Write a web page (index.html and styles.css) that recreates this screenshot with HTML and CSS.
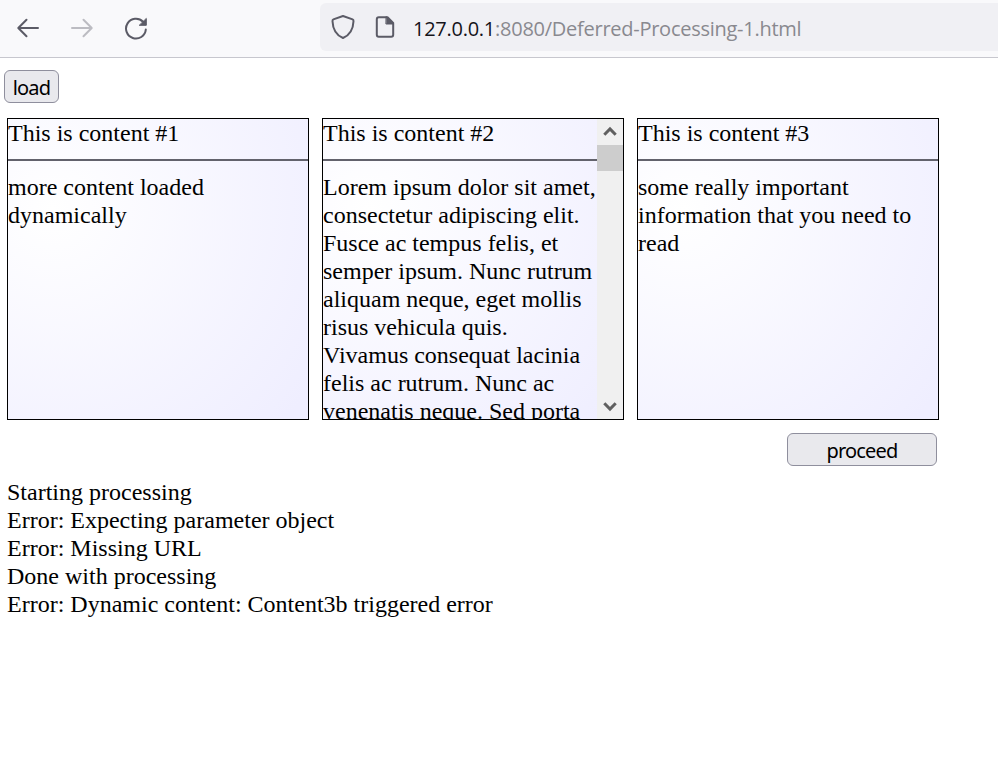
FILE: index.html
```html
<!DOCTYPE html>
<html lang="en">
<head>
<meta charset="utf-8">
<title>Deferred Processing</title>
<link rel="stylesheet" href="styles.css">
</head>
<body>
<header class="toolbar">
  <nav class="nav">
    <svg class="icon" width="24" height="24" viewBox="0 0 24 24"><path d="M22 12H2.500M10.500 3.700L2.300 12L10.500 20.300"/></svg>
    <svg class="icon disabled" width="24" height="24" viewBox="0 0 24 24"><path d="M2 12H21.500M13.500 3.700L21.700 12L13.500 20.300"/></svg>
    <svg class="icon" width="24" height="24" viewBox="0 0 24 24"><path d="M19 5.700A9.900 9.900 0 1 0 21.800 13.600"/><path class="solid" d="M22.300 2.800V9.300H15.600Z"/></svg>
  </nav>
  <div class="address">
    <svg class="icon" width="24" height="26" viewBox="0 0 24 26"><path d="M12 2L21.600 5.400Q22.600 5.800 22.500 7.200C22.200 15 18.500 21.200 12 24C5.500 21.200 1.800 15 1.500 7.200Q1.400 5.800 2.400 5.400Z"/></svg>
    <svg class="icon doc" width="20" height="24" viewBox="0 0 20 24"><path d="M12.500 2.200H3.800Q1.800 2.200 1.800 4.200V19.800Q1.800 21.800 3.800 21.800H16.200Q18.200 21.800 18.200 19.800V8Z"/><path class="solid" d="M11.300 1.800L18.700 9H11.300Z"/></svg>
    <span class="url"><span class="host">127.0.0.1</span>:8080/Deferred-Processing-1.html</span>
  </div>
</header>
<main class="page">
  <button class="btn load">load</button>
  <div class="panels">
    <section class="panel"><div class="text">This is content #1<hr>more content loaded<br>dynamically</div></section>
    <section class="panel">
      <div class="text">This is content #2<hr>Lorem ipsum dolor sit amet,<br>consectetur adipiscing elit.<br>Fusce ac tempus felis, et<br>semper ipsum. Nunc rutrum<br>aliquam neque, eget mollis<br>risus vehicula quis.<br>Vivamus consequat lacinia<br>felis ac rutrum. Nunc ac<br>venenatis neque. Sed porta</div>
      <div class="scrollbar">
        <svg class="arrow" width="26" height="26" viewBox="0 0 26 26"><path d="M7.300 15.800L13 10L18.700 15.800"/></svg>
        <div class="thumb"></div>
        <svg class="arrow down" width="26" height="26" viewBox="0 0 26 26"><path d="M7.300 10.200L13 16L18.700 10.200"/></svg>
      </div>
    </section>
    <section class="panel"><div class="text">This is content #3<hr>some really important<br>information that you need to<br>read</div></section>
  </div>
  <div class="actions"><button class="btn proceed">proceed</button></div>
  <div class="log">
    <div>Starting processing</div>
    <div>Error: Expecting parameter object</div>
    <div>Error: Missing URL</div>
    <div>Done with processing</div>
    <div>Error: Dynamic content: Content3b triggered error</div>
  </div>
</main>
</body>
</html>
```
FILE: styles.css
```css
* { box-sizing: border-box; }
body {
  margin: 0;
  background: #fff;
  color: #000;
  font: 24px/28px "Liberation Serif", serif;
  overflow: hidden;
}
.toolbar {
  display: flex;
  height: 58px;
  padding: 3px 0 0 16px;
  background: #f9f9fb;
  border-bottom: 1px solid #c7c7ce;
}
.nav { display: flex; gap: 30px; width: 304px; padding-top: 13px; }
.icon { flex: none; fill: none; stroke: #5b5b66; stroke-width: 2; stroke-linecap: round; stroke-linejoin: round; }
.icon .solid { fill: #5b5b66; stroke-width: 1; }
.disabled { stroke: #bcbcc2; }
.address {
  display: flex;
  align-items: center;
  flex: 1;
  height: 48px;
  padding-left: 11px;
  background: #f0f0f4;
  border-radius: 6px 0 0 6px;
}
.doc { margin-left: 20px; }
.url {
  margin: 4px 0 0 18px;
  font: 20px/28px "Open Sans", "Noto Sans", sans-serif;
  letter-spacing: -0.26px;
  color: #89898f;
  white-space: nowrap;
}
.host { color: #15141a; }
.page { padding: 12px 0 0 7px; }
.btn {
  display: block;
  height: 33px;
  padding: 1px 0 0;
  font: 20px/29px "Noto Sans", sans-serif;
  letter-spacing: -0.85px;
  color: #000;
  background: #e9e9ed;
  border: 1px solid #8f8f9d;
  border-radius: 6px;
}
.load { width: 55px; margin-left: -3px; }
.panels { display: flex; gap: 13px; margin-top: 15px; }
.panel {
  display: flex;
  width: 302px;
  height: 302px;
  overflow: hidden;
  border: 1px solid #000;
  background: radial-gradient(circle at 15% 30%, #fff, #efeeff 95%);
}
.text { flex: 1; white-space: nowrap; }
.text hr {
  height: 2px;
  margin: 12px 0;
  border: 0;
  background: #62626c;
}
.scrollbar { display: flex; flex-direction: column; width: 26px; background: #f0f0f0; }
.thumb { height: 26px; background: #cdcdcd; }
.arrow { fill: none; stroke: #606060; stroke-width: 3; }
.down { margin-top: auto; }
.actions { display: flex; justify-content: flex-end; width: 930px; margin-top: 13px; }
.proceed { width: 150px; }
.log { margin-top: 12px; }
```
